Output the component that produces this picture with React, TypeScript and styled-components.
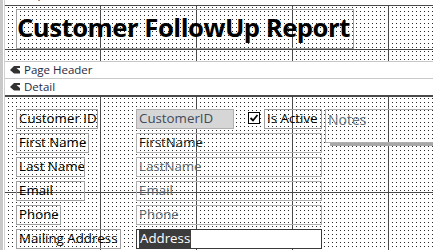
import React from 'react';
import styled, { createGlobalStyle } from 'styled-components';

const GlobalStyle = createGlobalStyle`
  html, body { margin: 0; padding: 0; background: #fff; }
  body { width: 433px; height: 250px; overflow: hidden; font-family: "Open Sans", "Noto Sans", sans-serif; }
`;

const Window = styled.div`
  width: 433px;
  height: 250px;
  display: flex;
  overflow: hidden;
  background: #fff;
`;

const Gutter = styled.div`
  width: 5px;
  flex: none;
  background: linear-gradient(to right, #c8c8c8 0 3px, #fff 3px 4px, #d2d2d2 4px 5px);
`;

const Main = styled.div`
  flex: 1;
  min-width: 0;
  display: flex;
  flex-direction: column;
`;

const SectionBar = styled.div<{ $first?: boolean; $dark?: boolean }>`
  flex: none;
  height: 16px;
  margin-top: ${p => (p.$first ? '-15px' : '0')};
  padding-bottom: ${p => (p.$first ? '3px' : '0')};
  box-sizing: content-box;
  border-top: 1px solid #c8c8c8;
  border-bottom: ${p => (p.$dark ? '1px solid #4a4a4a' : 'none')};
  display: flex;
  align-items: center;
  gap: 4px;
  padding-left: 5px;
  background: #fff;
  color: #1f2a44;
  font-size: 11.5px;
  line-height: 16px;
`;

const BarIcon = () => (
  <svg width="10" height="8" viewBox="0 0 10 8">
    <path d="M0 4 L4 0 L10 0 L10 2 L6.5 2 L10 5 L10 7.5 L4 7.5 Z" fill="#333" />
  </svg>
);

const Canvas = styled.div<{ $h: number; $lineY: number; $dotY: number; $top?: boolean }>`
  position: relative;
  flex: none;
  height: ${p => p.$h}px;
  border-top: ${p => (p.$top ? '1px solid #4a4a4a' : 'none')};
  background-image:
    linear-gradient(to right, #4a4a4a 1px, transparent 1px),
    linear-gradient(to bottom, #4a4a4a 1px, transparent 1px),
    conic-gradient(at 1px 1px, transparent 75%, #2a2a2a 0);
  background-size: 96px 100%, 100% 96px, 4px 4px;
  background-position: 95px 0, 0 ${p => p.$lineY}px, 3px ${p => p.$dotY}px;
  background-repeat: repeat-x, repeat-y, repeat;
`;

const TitleBox = styled.div`
  position: absolute;
  left: 11px;
  top: 3px;
  width: 338px;
  height: 40px;
  box-sizing: border-box;
  border: 1px solid #a0a0a0;
  font-size: 25.7px;
  font-weight: 700;
  letter-spacing: -0.5px;
  line-height: 36px;
  padding-left: 0;
  color: #000;
  white-space: nowrap;
`;

const Control = styled.div<{ $x: number; $y: number; $w: number; $h?: number }>`
  position: absolute;
  left: ${p => p.$x}px;
  top: ${p => p.$y}px;
  width: ${p => p.$w}px;
  height: ${p => p.$h ?? 20}px;
  box-sizing: border-box;
  padding-left: 2px;
  font-size: 13.3px;
  line-height: 17px;
  white-space: nowrap;
  overflow: hidden;
`;

const Label = styled(Control)`
  border: 1px solid #a0a0a0;
  color: #000;
`;

const Field = styled(Control)<{ $tone?: 'grey' | 'dark' | 'id'; $fill?: boolean; $active?: boolean }>`
  border: 1px solid ${p => (p.$active ? '#3a3a3a' : '#b0b0b0')};
  background: ${p => (p.$fill ? '#d6d6d6' : p.$active ? '#fff' : 'transparent')};
  color: ${p => (p.$tone === 'dark' ? '#1a1a1a' : p.$tone === 'id' ? '#3f4b5b' : '#5e6670')};
`;

const NotesBox = styled(Field)`
  font-size: 14px;
  line-height: 20px;
  color: #66707c;
`;

const Selected = styled.span`
  background: #3c3c3c;
  color: #fff;
  padding: 0 1px 1px 1px;
`;

const ShadowBar = styled.div`
  position: absolute;
  left: 325px;
  top: 47px;
  width: 110px;
  height: 3px;
  background: #a8a8a8;
`;

const CheckBox = styled.div`
  position: absolute;
  left: 243px;
  top: 16px;
  width: 12px;
  height: 12px;
  box-sizing: border-box;
  border: 1px solid #000;
  background: #fff;
  display: flex;
  align-items: center;
  justify-content: center;
`;

const labels = [
  { t: 'Customer ID', w: 82 },
  { t: 'First Name', w: 73 },
  { t: 'Last Name', w: 69 },
  { t: 'Email', w: 69 },
  { t: 'Phone', w: 45 },
  { t: 'Mailing Address', w: 105 },
];

const fields: { t: string; tone: 'grey' | 'dark' | 'id' }[] = [
  { t: 'FirstName', tone: 'dark' },
  { t: 'LastName', tone: 'grey' },
  { t: 'Email', tone: 'grey' },
  { t: 'Phone', tone: 'grey' },
];

export default function App() {
  return (
    <>
      <GlobalStyle />
      <Window>
        <Gutter />
        <Main>
          <SectionBar $first>
            <BarIcon />
            Report Header
          </SectionBar>
          <Canvas $h={55} $lineY={43} $dotY={1} $top>
            <TitleBox>Customer FollowUp Report</TitleBox>
          </Canvas>
          <SectionBar>
            <BarIcon />
            Page Header
          </SectionBar>
          <SectionBar $dark>
            <BarIcon />
            Detail
          </SectionBar>
          <Canvas $h={160} $lineY={96} $dotY={2}>
            {labels.map((l, i) => (
              <Label key={l.t} $x={11} $y={13 + i * 24} $w={l.w}>
                {l.t}
              </Label>
            ))}
            <Field $x={131} $y={13} $w={98} $fill $tone="id">
              CustomerID
            </Field>
            {fields.map((f, i) => (
              <Field key={f.t} $x={131} $y={37 + i * 24} $w={186} $tone={f.tone}>
                {f.t}
              </Field>
            ))}
            <Field $x={131} $y={133} $w={186} $active $tone="dark">
              <Selected>Address</Selected>
            </Field>
            <CheckBox>
              <svg width="10" height="10" viewBox="0 0 10 10">
                <path d="M1.5 5 L4 7.5 L8.5 2" stroke="#000" strokeWidth="1.8" fill="none" />
              </svg>
            </CheckBox>
            <Label $x={259} $y={13} $w={58}>
              Is Active
            </Label>
            <NotesBox $x={320} $y={13} $w={130} $h={34}>
              Notes
            </NotesBox>
            <ShadowBar />
          </Canvas>
        </Main>
      </Window>
    </>
  );
}
